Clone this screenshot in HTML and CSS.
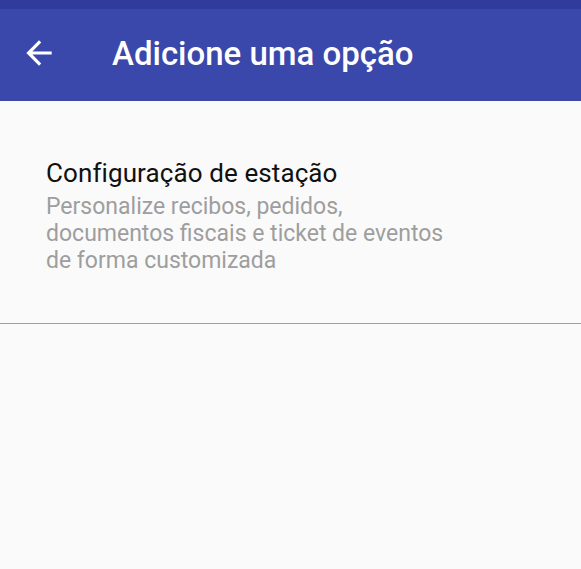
FILE: index.html
```html
<!DOCTYPE html>
<html>

	<head>
		<meta charset="UTF-8">
		<title>Adicione uma opção</title>
		<link rel="stylesheet" href="styles.css">
	</head>

	<body>
		<div class="status"></div>
		<div class="toolbar">
			<a class="back" href="javascript:;">
				<svg viewBox="0 0 24 24" width="38" height="38"><path fill="#fff" d="M20 11H7.83l5.59-5.59L12 4l-8 8 8 8 1.41-1.41L7.83 13H20v-2z"/></svg>
			</a>
			<h1>Adicione uma opção</h1>
		</div>
		<div class="item">
			<div class="title">Configuração de estação</div>
			<div class="desc">Personalize recibos, pedidos,<br>documentos fiscais e ticket de eventos<br>de forma customizada</div>
		</div>
	</body>

</html>
```

FILE: styles.css
```css
* {
	margin: 0;
	padding: 0;
	box-sizing: border-box;
}

body {
	background-color: #fafafa;
	font-family: Roboto, "Liberation Sans", sans-serif;
	width: 581px;
	height: 569px;
	overflow: hidden;
}

.status {
	height: 9px;
	background-color: #2f3c9c;
}

.toolbar {
	height: 92px;
	background-color: #3a48ac;
	display: flex;
	align-items: center;
	padding-bottom: 4px;
}

.toolbar .back {
	display: block;
	width: 38px;
	height: 38px;
	margin-left: 20px;
}

.toolbar h1 {
	color: #fff;
	font-size: 33px;
	font-weight: 500;
	margin-left: 54px;
}

.item {
	padding: 57px 46px 0;
	height: 223px;
	border-bottom: 1px solid #a0a0a0;
}

.item .title {
	font-size: 26px;
	letter-spacing: 0.1px;
	color: #111;
	line-height: 30px;
}

.item .desc {
	font-size: 23px;
	color: #9e9e9e;
	line-height: 27px;
	margin-top: 5px;
}
```
